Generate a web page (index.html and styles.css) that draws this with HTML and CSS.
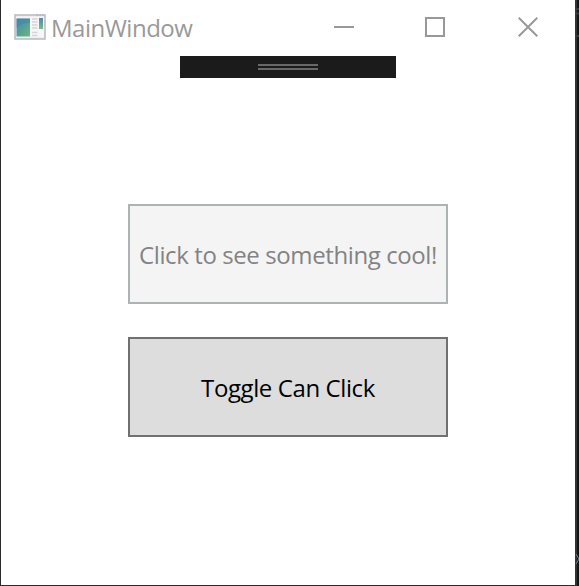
FILE: index.html
```
<!DOCTYPE html>
<html lang="en">
<head>
<meta charset="utf-8">
<title>MainWindow</title>
<link rel="stylesheet" href="styles.css">
</head>
<body>
<div class="desktop">
  <main class="window">
    <header class="titlebar">
      <svg class="app-icon" width="32" height="26" viewBox="0 0 32 26">
        <defs>
          <linearGradient id="pane" x1="0" y1="0" x2="1" y2="1">
            <stop offset="0" stop-color="#4d8fae"/>
            <stop offset=".5" stop-color="#559f97"/>
            <stop offset="1" stop-color="#6fb877"/>
          </linearGradient>
          <linearGradient id="strip" x1="0" y1="0" x2="0" y2="1">
            <stop offset="0" stop-color="#5886ac"/>
            <stop offset="1" stop-color="#72bd83"/>
          </linearGradient>
        </defs>
        <rect x="1" y="1" width="30" height="24" fill="#eceef1" stroke="#bcbec2" stroke-width="1.600"/>
        <path d="M22 1h8" stroke="#a9b1be" stroke-dasharray="2 1"/>
        <rect x="2" y="3" width="28" height="20" fill="#f6f6f7"/>
        <rect x="2.500" y="4.500" width="13.500" height="18" fill="url(#pane)"/>
        <path d="M2.500 4.500H16V9Q8 9 2.500 14z" fill="#3f7eae" opacity=".45"/>
        <path d="M18 5h5.500M18 8h5.500M18 11h5.500M18 14h5.500M18 18.500h5.500M18 21.500h5.500" stroke="#d5d5d7" stroke-width="1.500"/>
        <rect x="25" y="4" width="4" height="11" fill="url(#strip)"/>
      </svg>
      <h1 class="title">MainWindow</h1>
      <svg class="control minimize" width="20" height="20"><path d="M0 10h20"/></svg>
      <svg class="control maximize" width="20" height="20"><path d="M1 1h18v18H1z"/></svg>
      <svg class="control close" width="20" height="20"><path d="M.7.700l18.600 18.600M19.300.700L.7 19.300"/></svg>
    </header>
    <div class="debug-bar"><span class="grip"></span></div>
    <section class="content">
      <button class="button" disabled>Click to see something cool!</button>
      <button class="button">Toggle Can Click</button>
    </section>
  </main>
  <svg class="edge" width="4" height="586">
    <rect width="4" height="586" fill="#141414"/>
    <path d="M1 0v586" stroke="#333336" stroke-width="2"/>
    <path d="M0 9h4M0 13.500h4M0 36h4" stroke="#39393c" stroke-width="2"/>
    <path d="M1 554l3 5-3 5" fill="none" stroke="#717f87"/>
  </svg>
</div>
</body>
</html>
```
FILE: styles.css
```
* { box-sizing: border-box; }
body {
  margin: 0;
  font-family: "Open Sans", "Noto Sans", sans-serif;
  background: #1c1c1f;
}
.desktop {
  display: flex;
  width: 579px;
  height: 586px;
  padding-left: 1px;
  overflow: hidden;
  background: #2b2b2e;
}
.window {
  display: flex;
  flex-direction: column;
  width: 574px;
  height: 585px;
  background: #fff;
}
.edge { display: block; flex: none; }
.titlebar {
  display: flex;
  height: 56px;
  padding: 14px 0 0 13px;
}
.app-icon { flex: none; }
.title {
  width: 283px;
  margin: -2px 0 0 5px;
  font-size: 24px;
  line-height: 32px;
  font-weight: 400;
  letter-spacing: -.5px;
  white-space: nowrap;
  color: #999;
}
.control {
  flex: none;
  margin-top: 3px;
  fill: none;
  stroke: #999;
  stroke-width: 2;
}
.maximize { margin-left: 71px; }
.close { margin-left: 73px; }
.debug-bar {
  display: flex;
  align-items: center;
  justify-content: center;
  width: 216px;
  height: 22px;
  margin-left: 179px;
  background: #1b1b1b;
}
.grip {
  width: 60px;
  height: 6px;
  border: solid #686868;
  border-width: 2px 0;
}
.content {
  display: flex;
  flex-direction: column;
  gap: 33px;
  padding: 126px 0 0 127px;
}
.button {
  width: 320px;
  height: 100px;
  padding: 1px 0 0;
  border: 2px solid #707070;
  border-radius: 0;
  background: #ddd;
  color: #000;
  font: 24px/32px "Open Sans", "Noto Sans", sans-serif;
  letter-spacing: -.4px;
  white-space: nowrap;
}
.button:disabled {
  border-color: #adb2b5;
  background: #f4f4f4;
  color: #838383;
}
```
